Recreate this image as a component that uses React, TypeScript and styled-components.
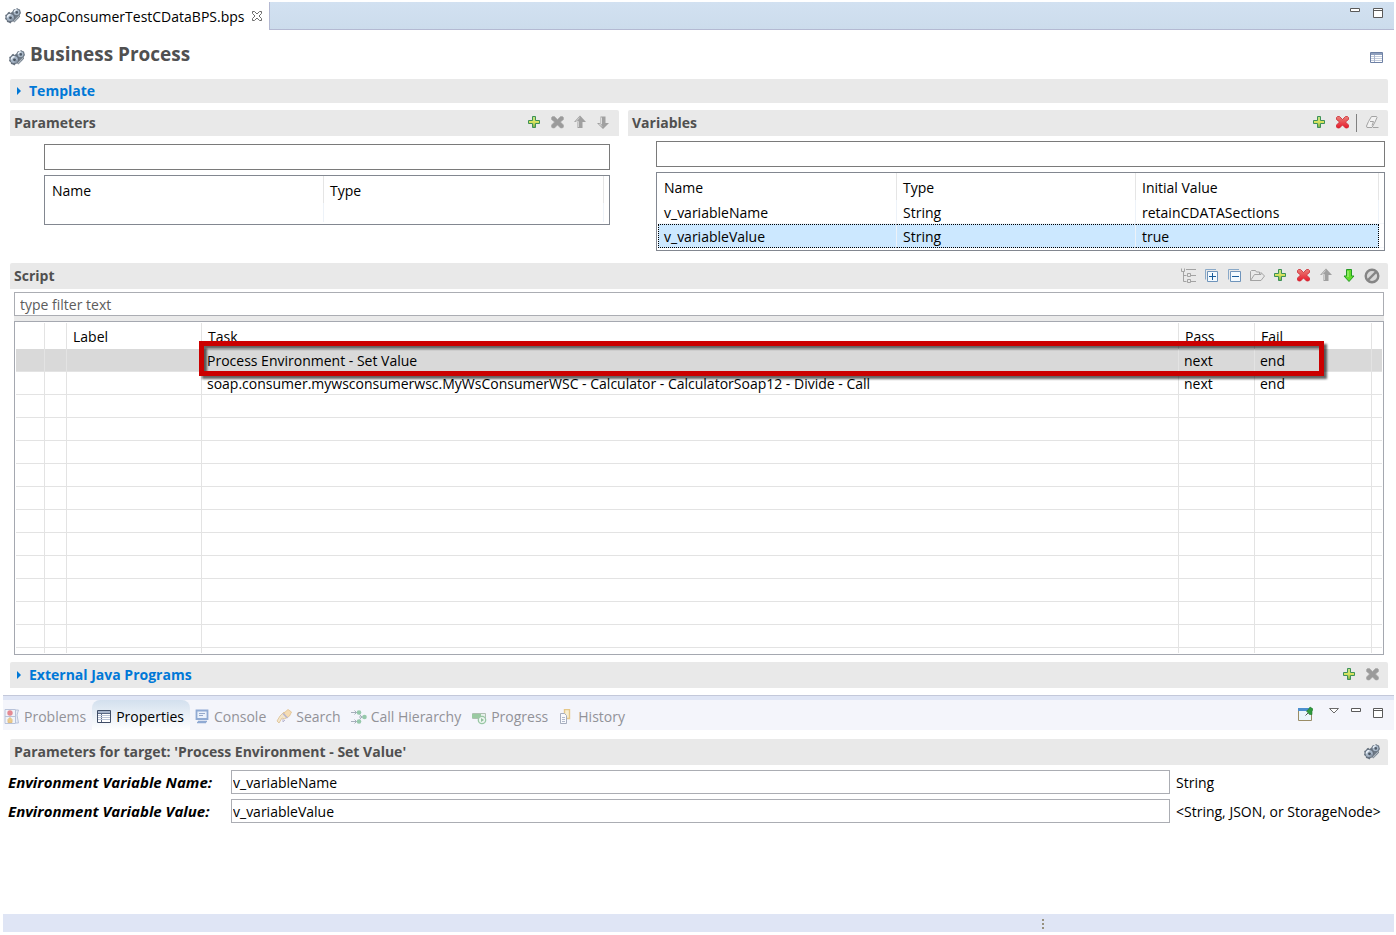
import React from "react";
import styled, { createGlobalStyle, css } from "styled-components";

const GlobalStyle = createGlobalStyle`
  *, *::before, *::after { box-sizing: border-box; }
  body { margin: 0; background: #fff; }
  body, button, input, table {
    font-family: "Open Sans", "Segoe UI", sans-serif;
    font-size: 14px;
    line-height: 20px;
    color: #000;
  }
  button { border: 0; padding: 0; background: none; }
  h1, h2 { margin: 0; }
`;

/* ---------- icons ---------- */

const Svg = styled.svg<{ $faded?: boolean }>`
  display: block;
  flex: none;
  opacity: ${(p) => (p.$faded ? 0.5 : 1)};
`;

type IconName =
  | "gears" | "plus" | "cross" | "crossOff" | "up" | "down" | "downOn" | "eraser"
  | "tree" | "expand" | "collapse" | "folder" | "block" | "min" | "max" | "menu"
  | "form" | "close" | "pin" | "problems" | "properties" | "console" | "search"
  | "calls" | "progress" | "history" | "caret";

const CROSS = "M2.5 2.5l1-1h2L8.500 4.500l3-3h2l1 1v2l-3 2.500 3 3v2l-1 1h-2l-3-3-3 3h-2l-1-1v-2l3-3-3-2.500z";

const drawings: Record<IconName, React.ReactNode> = {
  gears: (
    <>
      <path d="M9 1l1.500.500L12 0l1.500 1 1.500.500.500 2 .500 1.500-1 1.500v2l-1.500 1-1 1.500-2-.500L9 9 7.500 7 7 4z" fill="#6d7986" />
      <path d="M9 14.500l6-6v-2.500l-7 6z" fill="#7e8892" />
      <path d="M8.500 13.500l6-6M9.500 14.500l5-5" stroke="#bfc7d0" strokeWidth=".7" />
      <circle cx="11.500" cy="4.200" r="2.900" fill="#a9b8c8" />
      <path d="M9.300 4a2.300 2.300 0 0 1 2.500-2.200" stroke="#eef4fa" strokeWidth="1.200" fill="none" />
      <circle cx="11.800" cy="4.400" r="1.300" fill="#505b68" />
      <path d="M3 4.500l1.200-.700L5.500 5 7 4l1.200 1 .300 1.500 1.500.500V9l.500 1.500-1.500 1-.500 2-1.800.300L5.500 15.500l-1.700-1-1.800-.500-.300-1.800L0 11l.500-2L.200 7l1.600-.700z" fill="#66717e" />
      <circle cx="5.200" cy="9.500" r="3.600" fill="#a7b6c7" />
      <path d="M2.400 9.500A3 3 0 0 1 5.500 6.600" stroke="#edf3f9" strokeWidth="1.500" fill="none" />
      <path d="M8 10a3 3 0 0 1-2.500 2.500" stroke="#8795a5" strokeWidth="1.300" fill="none" />
      <circle cx="5.500" cy="9.800" r="1.400" fill="#48535f" />
    </>
  ),
  plus: (
    <>
      <defs>
        <linearGradient id="plusFill" x2="0" y2="1">
          <stop offset="0" stopColor="#b9e08c" />
          <stop offset=".5" stopColor="#dbe45c" />
          <stop offset="1" stopColor="#6fa84a" />
        </linearGradient>
      </defs>
      <path d="M6.500 1.500h3v4h4v3h-4v4h-3v-4h-4v-3h4z" fill="url(#plusFill)" stroke="#3d9157" />
    </>
  ),
  cross: (
    <>
      <defs>
        <linearGradient id="crossFill" x2="0" y2="1">
          <stop offset="0" stopColor="#e98078" />
          <stop offset="1" stopColor="#e81a2c" />
        </linearGradient>
      </defs>
      <path d={CROSS} fill="url(#crossFill)" stroke="#cc2a33" strokeWidth=".8" />
    </>
  ),
  crossOff: <path d={CROSS} fill="#9b9b9b" stroke="#a8a8a8" strokeWidth=".6" />,
  up: (
    <>
      <path d="M8 .5l6 6.500h-3.500v6h-5V7H2z" fill="#a0a0a0" />
      <path d="M7.500 2.500L4 6.500h2.500v5.500" fill="none" stroke="#d0d0d0" />
    </>
  ),
  down: (
    <>
      <path d="M8 14l6-6h-3.500V1.500h-5V8H2z" fill="#a0a0a0" />
      <path d="M6.500 2.500v6.500h-2L7 11.500" fill="none" stroke="#dedede" />
    </>
  ),
  downOn: (
    <>
      <path d="M8 13.500l5-5.500h-2.500V1.500h-5V8H3z" fill="#62dc2c" stroke="#259a25" />
      <path d="M7 3v6" stroke="#b7f58d" />
    </>
  ),
  eraser: (
    <>
      <path d="M7.500 1.500h5l.500 1-2 4.500-3 5.500h-5l-.500-1.500 2-4.500z" fill="#f2f2f2" stroke="#a3a3a3" />
      <path d="M6 6.500h3.500l-1.500 4M9 12.500h5.500" fill="none" stroke="#a3a3a3" />
    </>
  ),
  tree: (
    <path d="M1.500.500v3h3v-3M3.500 4v9.500h3M3.500 7.500h3M7.500 5.500h3v3h-3zM7.500 11.500h3v3h-3zM6 1.500h10M11 7.500h5M11 13.500h5" fill="none" stroke="#a3a3a3" />
  ),
  expand: (
    <>
      <path d="M2.500 11.500V1.500H13" fill="none" stroke="#8aa9c8" />
      <path d="M4.500 3.500h10v10h-10z" fill="#f3faff" stroke="#6f94bb" />
      <path d="M6 8.500h7M9.500 5v7" stroke="#175b9b" />
    </>
  ),
  collapse: (
    <>
      <path d="M2.500 11.500V1.500H13" fill="none" stroke="#8aa9c8" />
      <path d="M4.500 3.500h10v10h-10z" fill="#f3faff" stroke="#6f94bb" />
      <path d="M6 8.500h7" stroke="#175b9b" />
    </>
  ),
  folder: (
    <path d="M1.500 12.500v-9l1-1h4l1 1.500h3v2.500M1.500 12.500l4-6H12V4.500l3.500 3.500-3.500 4.500z" fill="none" stroke="#a3a3a3" />
  ),
  block: (
    <>
      <circle cx="8" cy="8" r="6.300" fill="#d8d8d8" stroke="#858585" strokeWidth="2.400" />
      <path d="M4 12l8-8" stroke="#858585" strokeWidth="2.400" />
    </>
  ),
  min: <path d="M3.500 3.500h9v3h-9z" fill="#fff" stroke="#5a5a5a" />,
  max: <path d="M3.500 3.500h9v9h-9zM3.500 5.500h9" fill="#fff" stroke="#5a5a5a" />,
  menu: <path d="M3.500 3.500h9L8 8z" fill="#fff" stroke="#6a6a6a" />,
  form: (
    <>
      <path d="M2 3h12v10H2z" fill="#fff" />
      <path d="M2 3h12v2H2z" fill="#8fa0bd" />
      <path d="M2 6.500h12M2 8.500h12M2 10.500h12" stroke="#c3ccdc" />
      <path d="M5.500 5v8" stroke="#a9b5cc" />
      <path d="M1.500 2.500h12v10h-12z" fill="none" stroke="#6d80a4" />
    </>
  ),
  close: (
    <path d="M3.500 3.500h2L8 6l2.500-2.500h2v2L10 8l2.500 2.500v2h-2L8 10l-2.500 2.500h-2v-2L6 8 3.500 5.500z" fill="#fff" stroke="#6d6d6d" />
  ),
  pin: (
    <>
      <path d="M1.500 2.500h13v12h-13z" fill="#e9f6fb" stroke="#9a8c66" />
      <path d="M1 2h14v3H1z" fill="#4d8fcf" />
      <path d="M8.500 9.500l3-3" stroke="#555" />
      <path d="M9.500 5l2-1.500 1.500-2.500 3 2-1 2.500v3l-2.500 0z" fill="#2f9a3c" stroke="#1f7a2c" strokeWidth=".6" />
    </>
  ),
  problems: (
    <>
      <path d="M1 .500h10.500v14H1z" fill="#eef2fa" stroke="#7d90b8" />
      <path d="M12 1h2.500l-1.500 5 1.500 8H12" fill="#dfe6f3" stroke="#7d90b8" />
      <path d="M1 7.500h10" stroke="#7d90b8" />
      <circle cx="6" cy="4" r="2.700" fill="#d8202c" />
      <path d="M4 13.500v-3l2-2 2 2v3z" fill="#e8a317" stroke="#d08a10" />
    </>
  ),
  properties: (
    <>
      <path d="M1.500 1.500h13v12h-13z" fill="#fff" stroke="#3f4d66" />
      <path d="M2 2h12v2H2z" fill="#a5b3ca" />
      <path d="M2 4.500h12M5.500 4v9" stroke="#5a6883" />
      <path d="M2 6.500h12M2 8.500h12M2 10.500h12" stroke="#b9c3d6" />
    </>
  ),
  console: (
    <>
      <path d="M2.500 1.500h11v8.500h-11z" fill="#e4eefb" stroke="#2f61ad" strokeWidth="1.800" />
      <path d="M5 4.500h6M5 6.500h4" stroke="#3b5f9c" />
      <path d="M4 12.500h9M3 13.500h9" stroke="#2f61ad" strokeWidth="1.300" />
    </>
  ),
  search: (
    <>
      <path d="M1 12l3-5 4-4 4 3-3 4-3-1-3 5z" fill="#f3d9a0" stroke="#c78c28" strokeWidth=".8" />
      <path d="M8 4l4-3.500 3.500 2.500-2 4-3 2z" fill="#f6c46f" stroke="#c98a24" strokeWidth=".8" />
      <path d="M7 4.500l4.500 4.500" stroke="#7d78a8" strokeWidth="1.500" />
      <path d="M7 10v3l2-2" fill="none" stroke="#7d78a8" />
    </>
  ),
  calls: (
    <>
      <path d="M0 3.500h7M3.500 1.500l2 2-2 2M0 12.500h7M3.500 10.500l2 2-2 2M8 8h5M8.500 5.500L11 8l-2.500 2.500" fill="none" stroke="#5b6b7c" />
      <circle cx="8" cy="3.500" r="2.300" fill="#3b9c5d" />
      <circle cx="8" cy="12.500" r="2.300" fill="#3b9c5d" />
      <circle cx="13.500" cy="8" r="2.300" fill="#3b9c5d" />
    </>
  ),
  progress: (
    <>
      <path d="M1.500 4.500h13v5h-13z" fill="#dcefdc" stroke="#6c8a6c" />
      <path d="M1 5h9v4H1z" fill="#42a04c" />
      <circle cx="11" cy="11" r="3.700" fill="#e9f7e9" stroke="#3f9a4f" strokeWidth="1.300" />
      <path d="M10 9l3 2-3 2z" fill="#2f8a40" />
    </>
  ),
  history: (
    <>
      <path d="M6.500.500h5v9h-5z" fill="#fbe9a8" stroke="#d79b1a" strokeWidth="1.400" />
      <path d="M2.500 4.500h4l2 2v8h-6z" fill="#fff" stroke="#5a6883" />
      <path d="M4 8.500h3M4 10.500h3M4 12.500h3" stroke="#6f7d9a" />
    </>
  ),
  caret: <path d="M6 4l4 4-4 4z" fill="#0078d7" />,
};

const Icon = ({ name, faded }: { name: IconName; faded?: boolean }) => (
  <Svg width="16" height="16" viewBox="0 0 16 16" $faded={faded} aria-hidden="true">
    {drawings[name]}
  </Svg>
);

/* ---------- shell ---------- */

const Shell = styled.div`
  min-height: 100vh;
  display: flex;
  flex-direction: column;
  padding: 2px 2px 3px 0;
`;

const EditorTabs = styled.header`
  display: flex;
  height: 28px;
`;

const EditorTab = styled.div`
  display: flex;
  align-items: center;
  gap: 4px;
  width: 269px;
  padding: 0 4px 0 5px;
  white-space: nowrap;
`;

const EditorTabLabel = styled.span`
  flex: 1;
  padding-top: 2px;
`;

const EditorTabRest = styled.div`
  flex: 1;
  display: flex;
  justify-content: flex-end;
  gap: 7px;
  padding: 3px 8px 0 0;
  background: linear-gradient(#d2e1f1, #ccdcec);
  border-left: 1px solid #b4b9d2;
  border-bottom: 1px solid #b4b9d2;
`;

const IconButton = styled.button`
  display: block;
  width: 16px;
  height: 16px;
  flex: none;
`;

const TitleRow = styled.div`
  display: flex;
  align-items: flex-end;
  height: 49px;
  padding: 0 9px 13px;
  gap: 5px;
`;

const Title = styled.h1`
  flex: 1;
  font-size: 19px;
  line-height: 24px;
  color: #505050;
`;

const Editor = styled.main`
  padding: 0 6px 0 10px;
`;

const Bar = styled.div<{ $short?: boolean }>`
  display: flex;
  align-items: center;
  height: ${(p) => (p.$short ? 24 : 26)}px;
  padding: 0 8px 0 4px;
  background: #e9e9e9;
  border-radius: 2px 2px 0 0;
`;

const barText = css`
  font-size: 14px;
  line-height: 20px;
  font-weight: 700;
`;

const BarTitle = styled.h2`
  ${barText}
  flex: 1;
  color: #505050;
`;

const BarToggle = styled.button`
  ${barText}
  display: flex;
  align-items: center;
  flex: 1;
  color: #0078d7;
  margin-left: -3px;
  gap: 2px;
`;

const Tools = styled.div`
  display: flex;
  align-items: center;
  gap: 7px;
`;

const Divider = styled.span`
  width: 1px;
  height: 18px;
  margin-left: -1px;
  background: #808080;
`;

const Columns = styled.div`
  display: grid;
  grid-template-columns: 609fr 760fr;
  gap: 9px;
  margin: 7px 0 12px;
`;

const SectionBody = styled.div<{ $side: "left" | "right" }>`
  display: flex;
  flex-direction: column;
  gap: 5px;
  padding: ${(p) => (p.$side === "left" ? "8px 9px 0 34px" : "5px 3px 0 28px")};
`;

const TextField = styled.input<{ $tall?: boolean }>`
  display: block;
  width: 100%;
  min-width: 0;
  height: ${(p) => (p.$tall ? 26 : 24)}px;
  padding: 0 1px;
  border: 1px solid ${(p) => (p.$tall ? "#7a7a7a" : "#abadb3")};
  border-radius: 0;
  background: #fff;
  outline: none;
`;

const FilterField = styled(TextField)`
  padding: 0 5px;
  &::placeholder { color: #5c5c5c; opacity: 1; }
`;

/* ---------- variable tables ---------- */

const GridFrame = styled.div`
  border: 1px solid #828790;
  padding: 0 0 2px 1px;
`;

const Grid = styled.table`
  width: 100%;
  table-layout: fixed;
  border-collapse: separate;
  border-spacing: 0;
`;

const Col = styled.col<{ $w?: number }>`
  width: ${(p) => (p.$w ? `${p.$w}px` : "auto")};
`;

const GridHead = styled.th`
  height: 27px;
  padding: 2px 0 0 6px;
  text-align: left;
  font-weight: 400;
  border-right: 1px solid #e5e5e5;
  &:last-child { border-right: 0; }
`;

const GridCell = styled.td`
  height: 24px;
  padding: 3px 0 0 6px;
  border-right: 1px solid #edf2f8;
  border-bottom: 1px solid #f4f6f9;
  &:last-child { border-right: 0; padding: 0; }
`;

const GridRow = styled.tr<{ $selected?: boolean; $blank?: boolean }>`
  ${(p) => p.$blank && css`${GridCell} { height: 19px; padding: 0; border-bottom: 0; }`}
  ${(p) =>
    p.$selected &&
    css`
      ${GridCell}:not(:last-child) {
        background: #cce8ff;
        border-top: 1px dotted #000;
        border-bottom: 1px dotted #000;
        padding-top: 2px;
      }
      ${GridCell}:first-child {
        border-left: 1px dotted #000;
        padding-left: 5px;
      }
      ${GridCell}:nth-last-child(2) { border-right: 1px dotted #000; }
    `}
`;

/* ---------- script table ---------- */

const ScriptArea = styled.div`
  display: flex;
  flex-direction: column;
  gap: 5px;
  margin: 3px 4px 7px;
  background: #eaeaea;
`;

const ScriptFrame = styled.div`
  position: relative;
  padding: 1px;
  border: 1px solid #a5a8b0;
  background: #fff;
`;

const ScriptHead = styled.th`
  height: 26px;
  padding: 2px 0 0 6px;
  text-align: left;
  font-weight: 400;
  border-right: 1px solid #e3e3e3;
  &:last-child { border-right: 0; }
`;

const ScriptCell = styled.td`
  height: 23px;
  padding: 2px 0 0 5px;
  white-space: nowrap;
  border-right: 1px solid #e3e3e3;
  border-bottom: 1px solid #e3e3e3;
  &:last-child { border-right: 0; }
`;

const ScriptRow = styled.tr<{ $selected?: boolean; $tail?: boolean }>`
  background: ${(p) => (p.$selected ? "#d9d9d9" : "#fff")};
  ${(p) => p.$tail && css`${ScriptCell} { height: 5px; border-bottom: 0; }`}
`;

const Highlight = styled.div`
  position: absolute;
  left: 184px;
  right: 59px;
  top: 19px;
  height: 35px;
  border: 5px solid #cb0000;
  filter: drop-shadow(3px 3px 1px rgba(0, 0, 0, 0.6));
  pointer-events: none;
`;

/* ---------- lower views ---------- */

const ViewTabs = styled.nav`
  display: flex;
  justify-content: space-between;
  height: 35px;
  margin: 7px 0 9px 3px;
  border-top: 1px solid #c3c8da;
  background: linear-gradient(#dfe5f5 4px, #f4f5fb 4px);
`;

const TabList = styled.div`
  display: flex;
  padding-top: 4px;
`;

const ViewTab = styled.button<{ $active?: boolean }>`
  display: flex;
  align-items: center;
  gap: 4px;
  padding: 3px 6px 0 4px;
  border-radius: 8px 8px 0 0;
  white-space: nowrap;
  color: ${(p) => (p.$active ? "#000" : "#929298")};
  background: ${(p) => (p.$active ? "linear-gradient(#d3e0ee, #fff)" : "none")};
  &:first-child { padding-left: 1px; }
`;

const ViewTools = styled.div`
  display: flex;
  gap: 6px;
  padding: 9px 8px 0 0;
`;

const PinSlot = styled.div`
  margin-right: 7px;
  padding-top: 1px;
`;

const PropertyBar = styled(Bar)`
  margin: 0 6px 0 10px;
`;

const Form = styled.div`
  display: grid;
  grid-template-columns: 223px 1fr 224px;
  row-gap: 5px;
  align-items: center;
  padding: 5px 0 0 8px;
`;

const FormLabel = styled.label`
  font-size: 15px;
  font-weight: 700;
  font-style: italic;
  white-space: nowrap;
`;

const FormHint = styled.span`
  padding: 2px 0 0 6px;
  white-space: nowrap;
`;

const StatusBar = styled.footer`
  display: flex;
  justify-content: flex-end;
  height: 18px;
  margin: auto 0 0 3px;
  padding: 5px 350px 0 0;
  background: #dfe5f5;
`;

const Grip = styled.span`
  width: 2px;
  height: 12px;
  background: repeating-linear-gradient(#97917f 0 2px, transparent 2px 4px);
`;

/* ---------- data ---------- */

const variables = [
  { name: "v_variableName", type: "String", value: "retainCDATASections" },
  { name: "v_variableValue", type: "String", value: "true", selected: true },
];

const steps = [
  { task: "Process Environment - Set Value", pass: "next", fail: "end", selected: true },
  {
    task: "soap.consumer.mywsconsumerwsc.MyWsConsumerWSC - Calculator - CalculatorSoap12 - Divide - Call",
    pass: "next",
    fail: "end",
  },
  ...Array.from({ length: 11 }, () => ({ task: "", pass: "", fail: "", selected: false })),
];

const views: { label: string; icon: IconName }[] = [
  { label: "Problems", icon: "problems" },
  { label: "Properties", icon: "properties" },
  { label: "Console", icon: "console" },
  { label: "Search", icon: "search" },
  { label: "Call Hierarchy", icon: "calls" },
  { label: "Progress", icon: "progress" },
  { label: "History", icon: "history" },
];

const Tool = ({ name, label }: { name: IconName; label: string }) => (
  <IconButton type="button" aria-label={label}>
    <Icon name={name} />
  </IconButton>
);

export default function App() {
  return (
    <>
      <GlobalStyle />
      <Shell>
        <EditorTabs>
          <EditorTab>
            <Icon name="gears" />
            <EditorTabLabel>SoapConsumerTestCDataBPS.bps</EditorTabLabel>
            <Tool name="close" label="Close" />
          </EditorTab>
          <EditorTabRest>
            <Tool name="min" label="Minimize editor" />
            <Tool name="max" label="Maximize editor" />
          </EditorTabRest>
        </EditorTabs>

        <TitleRow>
          <Icon name="gears" />
          <Title>Business Process</Title>
          <Tool name="form" label="Form view" />
        </TitleRow>

        <Editor>
          <Bar $short>
            <BarToggle type="button" aria-expanded="false">
              <Icon name="caret" />
              Template
            </BarToggle>
          </Bar>

          <Columns>
            <section>
              <Bar>
                <BarTitle>Parameters</BarTitle>
                <Tools>
                  <Tool name="plus" label="Add parameter" />
                  <Tool name="crossOff" label="Remove parameter" />
                  <Tool name="up" label="Move parameter up" />
                  <Tool name="down" label="Move parameter down" />
                </Tools>
              </Bar>
              <SectionBody $side="left">
                <TextField $tall aria-label="Filter parameters" />
                <GridFrame>
                  <Grid>
                    <colgroup>
                      <Col $w={278} />
                      <Col />
                      <Col $w={5} />
                    </colgroup>
                    <thead>
                      <tr>
                        <GridHead>Name</GridHead>
                        <GridHead>Type</GridHead>
                        <GridHead />
                      </tr>
                    </thead>
                    <tbody>
                      <GridRow $blank>
                        <GridCell />
                        <GridCell />
                        <GridCell />
                      </GridRow>
                    </tbody>
                  </Grid>
                </GridFrame>
              </SectionBody>
            </section>

            <section>
              <Bar>
                <BarTitle>Variables</BarTitle>
                <Tools>
                  <Tool name="plus" label="Add variable" />
                  <Tool name="cross" label="Remove variable" />
                  <Divider />
                  <Tool name="eraser" label="Clear value" />
                </Tools>
              </Bar>
              <SectionBody $side="right">
                <TextField $tall aria-label="Filter variables" />
                <GridFrame>
                  <Grid>
                    <colgroup>
                      <Col $w={239} />
                      <Col $w={239} />
                      <Col />
                      <Col $w={5} />
                    </colgroup>
                    <thead>
                      <tr>
                        <GridHead>Name</GridHead>
                        <GridHead>Type</GridHead>
                        <GridHead>Initial Value</GridHead>
                        <GridHead />
                      </tr>
                    </thead>
                    <tbody>
                      {variables.map((v) => (
                        <GridRow key={v.name} $selected={v.selected}>
                          <GridCell>{v.name}</GridCell>
                          <GridCell>{v.type}</GridCell>
                          <GridCell>{v.value}</GridCell>
                          <GridCell />
                        </GridRow>
                      ))}
                    </tbody>
                  </Grid>
                </GridFrame>
              </SectionBody>
            </section>
          </Columns>

          <section>
            <Bar>
              <BarTitle>Script</BarTitle>
              <Tools>
                <Tool name="tree" label="Show tree" />
                <Tool name="expand" label="Expand all" />
                <Tool name="collapse" label="Collapse all" />
                <Tool name="folder" label="Open" />
                <Tool name="plus" label="Add step" />
                <Tool name="cross" label="Remove step" />
                <Tool name="up" label="Move step up" />
                <Tool name="downOn" label="Move step down" />
                <Tool name="block" label="Disable step" />
              </Tools>
            </Bar>
            <ScriptArea>
              <FilterField placeholder="type filter text" aria-label="Filter script" />
              <ScriptFrame>
                <Grid>
                  <colgroup>
                    <Col $w={29} />
                    <Col $w={22} />
                    <Col $w={135} />
                    <Col />
                    <Col $w={76} />
                    <Col $w={117} />
                    <Col $w={10} />
                  </colgroup>
                  <thead>
                    <tr>
                      <ScriptHead />
                      <ScriptHead />
                      <ScriptHead>Label</ScriptHead>
                      <ScriptHead>Task</ScriptHead>
                      <ScriptHead>Pass</ScriptHead>
                      <ScriptHead>Fail</ScriptHead>
                      <ScriptHead />
                    </tr>
                  </thead>
                  <tbody>
                    {steps.map((s, i) => (
                      <ScriptRow key={i} $selected={s.selected}>
                        <ScriptCell />
                        <ScriptCell />
                        <ScriptCell />
                        <ScriptCell>{s.task}</ScriptCell>
                        <ScriptCell>{s.pass}</ScriptCell>
                        <ScriptCell>{s.fail}</ScriptCell>
                        <ScriptCell />
                      </ScriptRow>
                    ))}
                    <ScriptRow $tail>
                      {Array.from({ length: 7 }, (_, i) => (
                        <ScriptCell key={i} />
                      ))}
                    </ScriptRow>
                  </tbody>
                </Grid>
                <Highlight />
              </ScriptFrame>
            </ScriptArea>
          </section>

          <Bar>
            <BarToggle type="button" aria-expanded="false">
              <Icon name="caret" />
              External Java Programs
            </BarToggle>
            <Tools>
              <Tool name="plus" label="Add program" />
              <Tool name="crossOff" label="Remove program" />
            </Tools>
          </Bar>
        </Editor>

        <ViewTabs>
          <TabList>
            {views.map((v) => {
              const active = v.label === "Properties";
              return (
                <ViewTab key={v.label} type="button" $active={active}>
                  <Icon name={v.icon} faded={!active} />
                  {v.label}
                </ViewTab>
              );
            })}
          </TabList>
          <ViewTools>
            <PinSlot>
              <Tool name="pin" label="Pin view" />
            </PinSlot>
            <Tool name="menu" label="View menu" />
            <Tool name="min" label="Minimize view" />
            <Tool name="max" label="Maximize view" />
          </ViewTools>
        </ViewTabs>

        <section>
          <PropertyBar>
            <BarTitle>Parameters for target: 'Process Environment - Set Value'</BarTitle>
            <Tool name="gears" label="Configure" />
          </PropertyBar>
          <Form>
            <FormLabel htmlFor="envName">Environment Variable Name:</FormLabel>
            <TextField id="envName" defaultValue="v_variableName" />
            <FormHint>String</FormHint>
            <FormLabel htmlFor="envValue">Environment Variable Value:</FormLabel>
            <TextField id="envValue" defaultValue="v_variableValue" />
            <FormHint>&lt;String, JSON, or StorageNode&gt;</FormHint>
          </Form>
        </section>

        <StatusBar>
          <Grip />
        </StatusBar>
      </Shell>
    </>
  );
}
